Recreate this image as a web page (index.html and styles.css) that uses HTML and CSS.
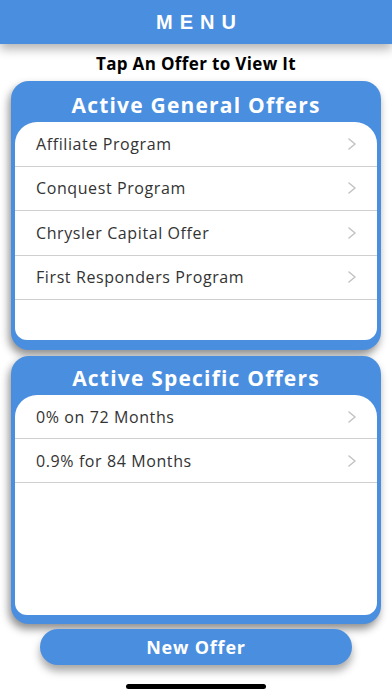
FILE: index.html
```html
<!DOCTYPE html>
<html>
<head>
<meta charset="utf-8">
<link rel="stylesheet" href="styles.css">
</head>
<body>
<div class="screen">
  <header class="topbar">MENU</header>
  <div class="hint">Tap An Offer to View It</div>
  <section class="card card-general">
    <h2 class="card-title">Active General Offers</h2>
    <ul class="list">
      <li class="row"><span>Affiliate Program</span><svg class="chev" viewBox="0 0 8 12"><path d="M1 1l6 5-6 5"/></svg></li>
      <li class="row"><span>Conquest Program</span><svg class="chev" viewBox="0 0 8 12"><path d="M1 1l6 5-6 5"/></svg></li>
      <li class="row"><span>Chrysler Capital Offer</span><svg class="chev" viewBox="0 0 8 12"><path d="M1 1l6 5-6 5"/></svg></li>
      <li class="row"><span>First Responders Program</span><svg class="chev" viewBox="0 0 8 12"><path d="M1 1l6 5-6 5"/></svg></li>
    </ul>
  </section>
  <section class="card card-specific">
    <h2 class="card-title">Active Specific Offers</h2>
    <ul class="list">
      <li class="row"><span>0% on 72 Months</span><svg class="chev" viewBox="0 0 8 12"><path d="M1 1l6 5-6 5"/></svg></li>
      <li class="row"><span>0.9% for 84 Months</span><svg class="chev" viewBox="0 0 8 12"><path d="M1 1l6 5-6 5"/></svg></li>
    </ul>
  </section>
  <button class="new-offer">New Offer</button>
  <div class="home-indicator"></div>
</div>
</body>
</html>
```
FILE: styles.css
```css
* { box-sizing: border-box; }
html, body { margin: 0; padding: 0; background: #fff; }
body { font-family: "Open Sans", "Liberation Sans", Arial, sans-serif; }
.screen {
  width: 392px;
  height: 696px;
  display: flex;
  flex-direction: column;
  align-items: center;
  overflow: hidden;
}
.topbar {
  width: 100%;
  height: 44px;
  flex: none;
  background: #4a8ee0;
  color: #fff;
  font-family: "Liberation Sans", Arial, sans-serif;
  font-weight: bold;
  font-size: 20px;
  letter-spacing: 7px;
  padding-left: 7px;
  display: flex;
  align-items: center;
  justify-content: center;
  box-shadow: 0 5px 10px rgba(0,0,0,0.3);
  position: relative;
  z-index: 2;
}
.hint {
  height: 37px;
  flex: none;
  display: flex;
  align-items: center;
  justify-content: center;
  font-weight: bold;
  font-size: 17px;
  letter-spacing: 0.35px;
  color: #000;
  padding-top: 2px;
}
.card {
  width: 370px;
  flex: none;
  background: #4a8ee0;
  border-radius: 18px;
  padding: 0 4px 10px;
  display: flex;
  flex-direction: column;
  box-shadow: -2px 5px 8px rgba(0,0,0,0.45);
}
.card-general { height: 269px; }
.card-specific { height: 268px; margin-top: 6px; padding-bottom: 9px; }
.card-title {
  margin: 0;
  height: 41px;
  flex: none;
  display: flex;
  align-items: center;
  justify-content: center;
  color: #fff;
  font-size: 21px;
  letter-spacing: 1.2px;
  font-weight: bold;
  padding-top: 6px;
}
.card-specific .card-title { height: 39px; padding-top: 4px; }
.list {
  list-style: none;
  margin: 0;
  padding: 0;
  flex: 1;
  background: #fff;
  border-radius: 22px 22px 12px 12px;
  overflow: hidden;
}
.row {
  height: 44.5px;
  border-bottom: 1px solid #cfcfcf;
  display: flex;
  align-items: center;
  justify-content: space-between;
  padding: 0 21px 0 21px;
  font-size: 16px;
  letter-spacing: 0.6px;
  color: #333;
}
.card-specific .row { height: 44px; }
.chev {
  width: 8px;
  height: 12px;
  fill: none;
  stroke: #c4c4c8;
  stroke-width: 1.6;
  stroke-linecap: round;
  stroke-linejoin: round;
}
.new-offer {
  margin-top: 5px;
  width: 312px;
  height: 36px;
  flex: none;
  border: none;
  border-radius: 18px;
  background: #4a8ee0;
  color: #fff;
  font-family: "Open Sans", "Liberation Sans", sans-serif;
  font-weight: bold;
  font-size: 18px;
  letter-spacing: 0.8px;
  box-shadow: 0 6px 8px rgba(0,0,0,0.35);
  padding: 0;
}
.home-indicator {
  margin-top: 19px;
  width: 140px;
  height: 5px;
  border-radius: 3px;
  background: #000;
  flex: none;
}
```
